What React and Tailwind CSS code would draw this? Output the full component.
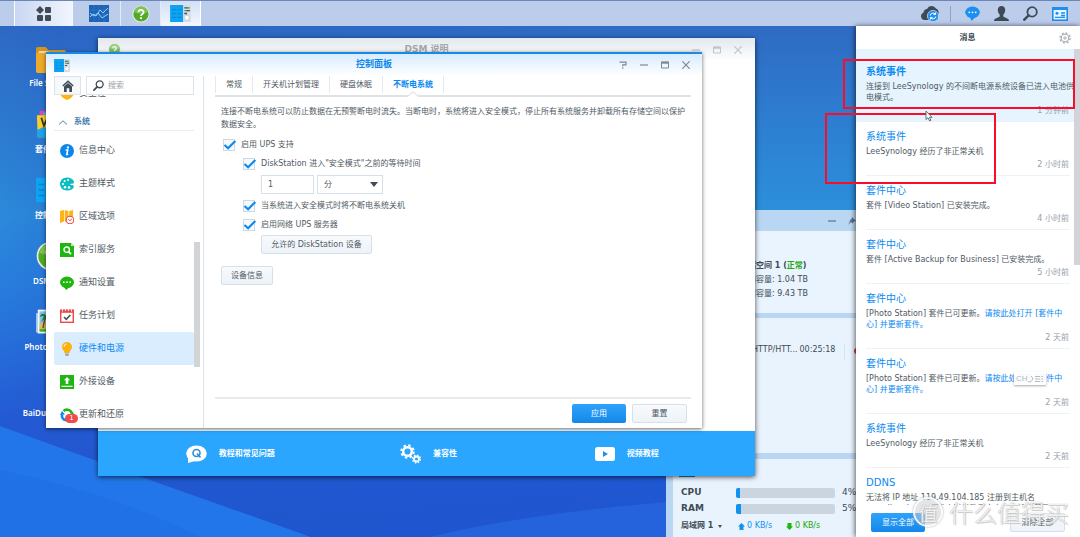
const shortcuts = [
  { name: 'File Station', icon: FolderIcon },
  { name: '套件中心', icon: PackageIcon },
  { name: '控制面板', icon: PanelIcon },
  { name: 'DSM 说明', icon: HelpIcon },
  { name: 'Photo Station', icon: PhotoIcon },
  { name: 'BaiDu NetDisk', icon: null },
]

const sections = [
  { name: '信息中心', icon: InfoIcon },
  { name: '主题样式', icon: PaletteIcon },
  { name: '区域选项', icon: RegionIcon },
  { name: '索引服务', icon: IndexIcon },
  { name: '通知设置', icon: NotifyIcon },
  { name: '任务计划', icon: TaskIcon },
  { name: '硬件和电源', icon: BulbIcon, active: true },
  { name: '外接设备', icon: DeviceIcon },
  { name: '更新和还原', icon: UpdateIcon, badge: 1 },
]

const tabs = ['常规', '开关机计划管理', '硬盘休眠', '不断电系统']

const messages = [
  { title: '系统事件', body: '连接到 LeeSynology 的不间断电源系统设备已进入电池供电模式。', time: '1 分钟前', unread: true },
  { title: '系统事件', body: 'LeeSynology 经历了非正常关机', time: '2 小时前' },
  { title: '套件中心', body: '套件 [Video Station] 已安装完成。', time: '4 小时前' },
  { title: '套件中心', body: '套件 [Active Backup for Business] 已安装完成。', time: '5 小时前' },
  { title: '套件中心', body: '[Photo Station] 套件已可更新。', link: '请按此处打开 [套件中心] 并更新套件。', time: '2 天前' },
  { title: '套件中心', body: '[Photo Station] 套件已可更新。', link: '请按此处打开 [套件中心] 并更新套件。', time: '2 天前' },
  { title: '系统事件', body: 'LeeSynology 经历了非正常关机', time: '2 天前' },
  { title: 'DDNS', body: '无法将 IP 地址 119.49.104.185 注册到主机名 www.lineok.cn，因为(未知)致了向右，请检查是否设置', time: '3 天前' },
]

/* ---------- icons ---------- */

function FolderIcon({ className }) {
  return (
    <svg viewBox="0 0 34 30" className={className} preserveAspectRatio="none">
      <path d="M0 6a2 2 0 0 1 2-2h9l3 3h18a2 2 0 0 1 2 2v17H0z" fill="#d9931a" />
      <path d="M3 8h29v8H3z" fill="#e9d9ae" />
      <path d="M0 10h12l3-2h17v20a2 2 0 0 1-2 2H2a2 2 0 0 1-2-2z" fill="#eeaa2c" />
    </svg>
  )
}

function PackageIcon({ className }) {
  return (
    <svg viewBox="0 0 34 30" className={className}>
      <path d="M4 0h12v8H4z" fill="#e83fb0" />
      <path d="M8 2h20v8H8z" fill="#35c0ee" />
      <path d="M1 5h32v12l-3 13H2z" fill="#f6cf2b" />
      <path d="M1 22l6-3h20l6 3v8H1z" fill="#1ea4e8" />
      <path d="M6 8l3 9 3-7 3 7 3-9" fill="none" stroke="#333" strokeWidth="2" />
    </svg>
  )
}

function PanelIcon({ className }) {
  return (
    <svg viewBox="0 0 22 18" className={className}>
      <rect x="0" y="0" width="14" height="18" fill="#0da2f2" />
      <path d="M2 5h4M2 9h4M2 13h4M8 5h4M8 9h4M8 13h4" stroke="#0784d0" strokeWidth="1" />
      <rect x="14" y="0" width="8" height="18" fill="#d7dee6" />
      <path d="M15 3h4M17 6h4M15 9h3" stroke="#3f5063" strokeWidth="1.4" />
      <path d="M18 3h3M15 6h2" stroke="#37b34a" strokeWidth="1.4" />
      <circle cx="17.800" cy="13.500" r="2.600" fill="#fff" stroke="#b5bec8" strokeWidth=".6" />
    </svg>
  )
}

function HelpIcon({ className }) {
  return (
    <svg viewBox="0 0 18 18" className={className}>
      <circle cx="9" cy="9" r="8.600" fill="#e4ecdf" />
      <circle cx="9" cy="9" r="7.600" fill="#53a928" />
      <path d="M2 7a7.200 7.200 0 0 1 14 0q-7 3-14 0" fill="#7cc552" />
      <path d="M6.500 7.200a2.500 2.300 0 1 1 3.700 2Q9 9.900 9 11" fill="none" stroke="#fff" strokeWidth="1.700" />
      <circle cx="9" cy="13.200" r="1.100" fill="#fff" />
    </svg>
  )
}

function PhotoIcon({ className }) {
  return (
    <svg viewBox="0 0 34 30" className={className}>
      <rect x="0" y="5" width="28" height="22" fill="#9fc8e8" />
      <rect x="2" y="1" width="32" height="27" fill="#f5f7f8" />
      <rect x="4" y="3" width="28" height="20" fill="#7cc3ea" />
      <path d="M4 17l10-4 18 8v4H4z" fill="#e2b766" />
      <path d="M4 23h28v3H4z" fill="#36b81e" />
      <path d="M8 22Q9 13 12 8" fill="none" stroke="#6b4a20" strokeWidth="1.600" />
      <path d="M12 8Q7 3 4 9l5-1-3 7 6-6 5 6 0-6 5 1Q18 3 12 8" fill="#1d7a35" />
    </svg>
  )
}

function InfoIcon({ className }) {
  return (
    <svg viewBox="0 0 14 14" className={className}>
      <circle cx="7" cy="7" r="7" fill="#0b86ec" />
      <circle cx="7.900" cy="3.500" r="1.150" fill="#fff" />
      <path d="M5.600 6h2.200L6.700 10.600h1.500" fill="none" stroke="#fff" strokeWidth="1.500" />
    </svg>
  )
}

function PaletteIcon({ className }) {
  return (
    <svg viewBox="0 0 14 14" className={className}>
      <path d="M7 .5C11 .5 14 3 14 5.200c0 1.500-1.500 1.600-3 1.600-1 0-1 1.200 0 1.300 1.300.1 3 .2 2.800 1.600C13.500 12 10.500 13.500 7 13.500 3 13.500 0 10.700 0 7S3 .5 7 .5z" fill="#0fbdc2" />
      <g fill="#fff">
        <circle cx="3" cy="7" r="1.100" /><circle cx="4.600" cy="4" r="1" /><circle cx="8" cy="3" r=".9" /><circle cx="5" cy="10.200" r="1.200" /><circle cx="9" cy="10.500" r="1.200" />
      </g>
    </svg>
  )
}

function RegionIcon({ className }) {
  return (
    <svg viewBox="0 0 14 14" className={className}>
      <path d="M0 1l4-1v11.500L0 13zM4.700 0L8.500 1v11L4.700 11.500zM9.200 1L13 0v10H9.200z" fill="#fdb515" />
      <circle cx="10" cy="10" r="3.800" fill="#fff" stroke="#ef4848" strokeWidth="1.100" />
      <path d="M8.200 9.300l1.600 1.400 2-1.600" fill="none" stroke="#ef4848" strokeWidth="1" />
    </svg>
  )
}

function IndexIcon({ className }) {
  return (
    <svg viewBox="0 0 14 14" className={className}>
      <path d="M0 0h11l3 3v11H0z" fill="#1fb610" />
      <path d="M11 0v3h3z" fill="#bfeab8" />
      <circle cx="6.700" cy="6.700" r="2.700" fill="none" stroke="#fff" strokeWidth="1.400" />
      <path d="M8.600 8.600l2.400 2.600" stroke="#fff" strokeWidth="1.700" />
    </svg>
  )
}

function NotifyIcon({ className }) {
  return (
    <svg viewBox="0 0 14 14" className={className}>
      <ellipse cx="7" cy="6.300" rx="7" ry="5.800" fill="#1fb610" />
      <path d="M4 11l2 3 4-3z" fill="#1fb610" />
      <g fill="#fff"><circle cx="3.800" cy="6.200" r=".9" /><circle cx="7" cy="6.200" r=".9" /><circle cx="10.200" cy="6.200" r=".9" /></g>
    </svg>
  )
}

function TaskIcon({ className }) {
  return (
    <svg viewBox="0 0 14 14" className={className}>
      <rect x=".7" y="1.200" width="12.600" height="12.100" fill="#fff" stroke="#ef4848" strokeWidth="1.400" />
      <path d="M0 .8h14v3H0z" fill="#ef4848" />
      <path d="M2.500 0v2.500M11.500 0v2.500M5.500 0v2M8.500 0v2" stroke="#fff" strokeWidth=".8" />
      <path d="M4 8l2.300 2.300L10.300 6" fill="none" stroke="#46505c" strokeWidth="1.600" />
    </svg>
  )
}

function BulbIcon({ className }) {
  return (
    <svg viewBox="0 0 14 14" className={className}>
      <path d="M7 0a5 5 0 0 1 5 5c0 2.600-2.300 3.500-2.500 6h-5C4.300 8.500 2 7.600 2 5a5 5 0 0 1 5-5z" fill="#fdb10b" />
      <path d="M4 4.800A3.200 3.200 0 0 1 6.500 2" fill="none" stroke="#fff" strokeWidth="1" />
      <path d="M5 11.500h4v1.200L8 14H6l-1-1.300z" fill="#9ba5ae" />
    </svg>
  )
}

function DeviceIcon({ className }) {
  return (
    <svg viewBox="0 0 14 14" className={className}>
      <path d="M0 0h14v14H0z" fill="#1fb610" />
      <path d="M1.500 11.300h11" stroke="#fff" strokeWidth="1.200" />
      <path d="M7 2l3 3.300H8.300V9H5.700V5.300H4z" fill="#fff" />
    </svg>
  )
}

function UpdateIcon({ className }) {
  return (
    <svg viewBox="0 0 14 14" className={className}>
      <path d="M3.500 3A5.200 5.200 0 0 1 12 5.500" fill="none" stroke="#1fb610" strokeWidth="2.600" />
      <path d="M13.800 4.500L13 9 9.500 6z" fill="#1fb610" />
      <path d="M2 6.500A5 5 0 0 0 6 12.300" fill="none" stroke="#0b86ec" strokeWidth="2.600" />
      <path d="M0 7l2-4 3 3.500z" fill="#0b86ec" />
    </svg>
  )
}

function SearchIcon({ className }) {
  return (
    <svg viewBox="0 0 14 14" className={className} fill="none" stroke="currentColor">
      <circle cx="8.500" cy="5.500" r="4.400" strokeWidth="1.700" />
      <path d="M5.300 8.700L1.200 12.800" strokeWidth="2.300" strokeLinecap="round" />
    </svg>
  )
}

function HomeIcon({ className }) {
  return (
    <svg viewBox="0 0 12 12" className={className} fill="none" stroke="#414b55">
      <path d="M.8 6L6 1.300 11.200 6" strokeWidth="1.500" />
      <path d="M2 6.500L6 3l4 3.500V12H7.300V8.300H4.700V12H2z" fill="#414b55" stroke="none" />
    </svg>
  )
}

function MinusIcon() {
  return (
    <svg viewBox="0 0 8 8" className="size-2" fill="none" stroke="currentColor"><path d="M0 4h8" strokeWidth="1.200" /></svg>
  )
}

function WindowControls({ help }) {
  return (
    <div className="flex items-center gap-[13px]">
      {help && (
        <button type="button" aria-label="帮助">
          <svg viewBox="0 0 8 8" className="size-2" fill="none" stroke="currentColor" strokeWidth="1.200">
            <path d="M.5 1.200h6.500v2.600H3.800v1.400M3.800 6.300v1.400" />
          </svg>
        </button>
      )}
      <button type="button" aria-label="最小化"><MinusIcon /></button>
      <button type="button" aria-label="最大化">
        <svg viewBox="0 0 8 8" className="size-2" fill="none" stroke="currentColor">
          <path d="M.5 1h7v6h-7z" /><path d="M0 1.700h8" strokeWidth="2" />
        </svg>
      </button>
      <button type="button" aria-label="关闭">
        <svg viewBox="0 0 8 8" className="size-2" fill="none" stroke="currentColor" strokeWidth="1.200"><path d="M.3.3l7.400 7.400M7.700.3L.3 7.700" /></svg>
      </button>
    </div>
  )
}

/* ---------- desktop ---------- */

function Wallpaper() {
  return (
    <svg className="absolute inset-0 h-full w-full" viewBox="0 0 1080 537" preserveAspectRatio="none" aria-hidden="true">
      <defs>
        <linearGradient id="sky" x1="0" y1="0" x2="0" y2="1">
          <stop offset="0" stopColor="#2f66c0" />
          <stop offset=".4" stopColor="#2c90dd" />
          <stop offset=".55" stopColor="#287fe0" />
          <stop offset=".78" stopColor="#235ad6" />
          <stop offset="1" stopColor="#1e55cf" />
        </linearGradient>
        <linearGradient id="shade" x1="0" y1="0" x2="1" y2="0">
          <stop offset="0" stopColor="#2456c4" stopOpacity=".1" />
          <stop offset=".05" stopColor="#2456c4" stopOpacity=".3" />
          <stop offset=".6" stopColor="#2456c4" stopOpacity="0" />
        </linearGradient>
      </defs>
      <path d="M0 0h1080v537H0z" fill="url(#sky)" />
      <path d="M0 0h1080v537H0z" fill="url(#shade)" />
      <path d="M0 426Q110 466 212 502T310 537H0z" fill="#2376e9" />
      <path d="M0 470Q110 492 200 537H0z" fill="#2070e6" />
      <path d="M430 537Q540 510 720 498V537z" fill="#2463dc" />
    </svg>
  )
}

function Taskbar() {
  return (
    <header className="relative flex h-[26px] items-stretch border-t border-[#6c87b4] bg-[#bccdec]">
      <button type="button" aria-label="主菜单" className="ml-[14px] flex w-[59px] items-center justify-center border-x border-white/80 bg-linear-to-r from-[#c9d7f1] to-[#f1f5fd]">
        <svg viewBox="0 0 16 16" className="size-4" fill="#3f4a57">
          <path d="M4 0l4 4-4 4-4-4z" />
          <rect x="9" y="1" width="6" height="6" rx="1" /><rect x="1" y="9" width="6" height="6" rx="1" /><rect x="9" y="9" width="6" height="6" rx="1" />
        </svg>
      </button>
      <button type="button" aria-label="资源监控" className="ml-1 flex w-[44px] items-center justify-center border-r border-white/60">
        <svg viewBox="0 0 20 17" className="h-[17px] w-5">
          <rect width="20" height="17" fill="#1c63b5" />
          <path d="M0 5h20M0 10h20M5 0v17M10 0v17M15 0v17" stroke="#3b80cc" strokeWidth=".5" />
          <path d="M1 12l3-3 3 2 4-6 3 3 5-5M1 8l4 3 4-3 4 5 6-4" fill="none" stroke="#8fd0ff" strokeWidth="1" />
        </svg>
      </button>
      <button type="button" aria-label="DSM 说明" className="flex w-10 items-center justify-center border-r border-white/60"><HelpIcon className="size-[18px]" /></button>
      <button type="button" aria-label="控制面板" className="flex w-10 items-center justify-center border-r border-white bg-linear-to-b from-[#d3dff5] to-[#f3f7fe]"><PanelIcon className="h-[17px] w-[21px]" /></button>

      <div className="ml-auto flex items-center gap-[14px] pr-3 text-[#3f4a57]">
        <button type="button" aria-label="云同步">
          <svg viewBox="0 0 20 17" className="h-[17px] w-5">
            <path d="M4 15a4 4 0 0 1-.5-7.600A4 4 0 0 1 7 4a5 5 0 0 1 9-.5A4.500 4.500 0 0 1 18 10v5z" fill="#3f4a57" />
            <circle cx="13" cy="11" r="5.600" fill="#1c8ff0" stroke="#d8e8fb" strokeWidth=".7" />
            <path d="M10.200 10.500a2.900 2.900 0 0 1 5-1.500M15.800 11.500a2.900 2.900 0 0 1-5 1.500M15.500 7.500V9.500h-2M10.500 14.500v-2h2" fill="none" stroke="#fff" />
          </svg>
        </button>
        <span className="-ml-1 h-4 w-px bg-[#8fa3c6]" />
        <button type="button" aria-label="消息">
          <svg viewBox="0 0 15 15" className="size-[15px]">
            <ellipse cx="7.500" cy="6.300" rx="7.300" ry="5.800" fill="#1c8ff0" />
            <path d="M5 11l1.500 4L11 10.500z" fill="#1c8ff0" />
            <g fill="#fff"><circle cx="4.300" cy="6.300" r=".9" /><circle cx="7.500" cy="6.300" r=".9" /><circle cx="10.700" cy="6.300" r=".9" /></g>
          </svg>
        </button>
        <button type="button" aria-label="用户">
          <svg viewBox="0 0 15 15" className="size-[15px]" fill="currentColor">
            <path d="M7.500 0C10 0 11.300 1.700 11.200 4c0 2-.8 3.800-1.900 4.600v1.700c0 1.400 5.700 1.400 5.700 4.700H0c0-3.300 5.700-3.300 5.700-4.700V8.600C4.600 7.800 3.800 6 3.800 4 3.700 1.700 5 0 7.500 0z" />
          </svg>
        </button>
        <button type="button" aria-label="搜索"><SearchIcon className="size-[15px]" /></button>
        <button type="button" aria-label="小工具">
          <svg viewBox="0 0 16 14" className="h-[14px] w-4">
            <rect x=".8" y=".8" width="14.400" height="12.400" fill="#eaf4ff" stroke="#1c8ff0" strokeWidth="1.600" />
            <path d="M0 2h16" stroke="#1c8ff0" strokeWidth="2" />
            <circle cx="5" cy="6.200" r="1.500" fill="#1c8ff0" />
            <path d="M9 6h4M9 8.500h4M3 10.300h10" stroke="#1c8ff0" strokeWidth="1.300" />
          </svg>
        </button>
      </div>
    </header>
  )
}

function Shortcuts() {
  return (
    <nav className="relative ml-[11px] flex w-20 flex-col pt-[17px]">
      {shortcuts.map(({ name, icon: Icon }) => (
        <a key={name} href="#" className="flex h-[66px] flex-col items-center gap-1 text-white">
          <span className="flex size-[30px] items-center justify-center">{Icon && <Icon className="size-[30px]" />}</span>
          <span className="font-['Noto_Sans','Noto_Sans_CJK_SC',sans-serif] text-[8px] leading-3 font-semibold whitespace-nowrap">{name}</span>
        </a>
      ))}
    </nav>
  )
}

function Meter({ label, value }) {
  return (
    <div className="flex h-4 items-center">
      <span className="w-[55px] font-bold">{label}</span>
      <div className="h-[10px] w-[99px] overflow-hidden rounded-xs bg-[#cbd5df]">
        <div className="h-full bg-[#1192f0]" style={{ width: `${value}%` }} />
      </div>
      <span className="ml-[7px] text-[9px]">{value}%</span>
    </div>
  )
}

function Widgets() {
  return (
    <section className="absolute top-[210px] right-[180px] bottom-0 flex w-[234px] flex-col bg-[#b9d7f3] pl-[7px] text-[8px] text-[#414b55]">
      <div className="flex h-[21px] items-center justify-end gap-3 pr-10 text-[#5f7388]">
        <MinusIcon />
        <svg viewBox="0 0 8 8" className="mr-1 size-2" fill="currentColor"><path d="M4 0l4 4-2 .5-1.500 2L1.500 3.500l2-1.500zM3 5L0 8l2-4z" /></svg>
      </div>
      <div className="flex h-[82px] flex-col bg-[#e9f4fe] pt-7 pl-[67px] leading-[14px] whitespace-nowrap">
        <p className="font-bold">存储空间 1 (<span className="text-[#1fa810]">正常</span>)</p>
        <p>使用容量: 1.04 TB</p>
        <p>可用容量: 9.43 TB</p>
      </div>
      <div className="mt-[5px] flex h-[135px] bg-[#e9f3fd] pt-[26px] whitespace-nowrap">
        <span className="ml-[79px]">HTTP/HTT...</span>
        <span className="ml-[2px]">00:25:18</span>
        <span className="ml-[9px] h-4 w-px bg-[#d6e2ee]" />
        <span className="mt-1 ml-[9px] size-[6px] rounded-full bg-[#e0393e]" />
      </div>
      <div className="mt-[6px] flex flex-1 flex-col bg-[#e9f3fd] px-2 text-[9px]">
        <div className="mt-3 mb-2 ml-[-2px] h-[6px] w-4 bg-[#1c76bd]" />
        <Meter label="CPU" value={4} />
        <Meter label="RAM" value={5} />
        <div className="flex h-[18px] items-center whitespace-nowrap">
          <button type="button" className="flex w-[57px] items-center gap-[5px] text-[8px] font-bold">局域网 1
            <svg viewBox="0 0 4 3" className="h-[3px] w-1" fill="currentColor"><path d="M0 0h4L2 3z" /></svg>
          </button>
          <svg viewBox="0 0 7 7" className="mr-[2px] size-[7px]" fill="#1192f0"><path d="M3.500 0L7 3.500H5.500V7h-4V3.500H0z" /></svg>
          <span className="w-[39px] text-[8px] text-[#1192f0]">0 KB/s</span>
          <svg viewBox="0 0 7 7" className="mr-[2px] size-[7px]" fill="#1fb610"><path d="M3.500 7L7 3.500H5.500V0h-4v3.500H0z" /></svg>
          <span className="text-[8px] text-[#1fa810]">0 KB/s</span>
        </div>
      </div>
    </section>
  )
}

function HelpWindow() {
  return (
    <section className="absolute top-[38px] left-[98px] flex h-[438px] w-[657px] flex-col bg-white shadow-[0_1px_5px_rgba(0,0,0,0.7)]">
      <div className="grid h-[23px] grid-cols-3 items-center bg-linear-to-b from-[#e3e8ed] to-white px-[10px]">
        <HelpIcon className="size-[13px] opacity-70" />
        <h2 className="text-center text-[9px] font-bold text-[#a3a8ae]">DSM 说明</h2>
        <div className="flex justify-end pr-[3px] text-[#c0c5ca]"><WindowControls /></div>
      </div>
      <div className="mt-auto grid h-[45px] grid-cols-3 bg-[#2aa6ff] pr-[29px] pl-[33px] text-[8px] font-bold text-white">
        <a href="#" className="flex items-center justify-center gap-3">
          <svg viewBox="0 0 21 18" className="h-[18px] w-[21px]">
            <ellipse cx="10.500" cy="8.500" rx="10.300" ry="8" fill="#fff" />
            <path d="M2 11v7l7-2z" fill="#fff" />
            <circle cx="10.500" cy="8" r="3.500" fill="none" stroke="#2a8fdc" strokeWidth="1.600" />
            <path d="M11 8.500l3.500 4" stroke="#2a8fdc" strokeWidth="1.600" />
          </svg>
          教程和常见问题
        </a>
        <a href="#" className="flex items-center justify-center gap-3">
          <svg viewBox="0 0 21 20" className="h-5 w-[21px]" fill="none" stroke="#fff">
            <circle cx="7.500" cy="7.500" r="4.300" strokeWidth="2.400" />
            <circle cx="7.500" cy="7.500" r="6.200" strokeWidth="2" strokeDasharray="2.435 2.435" />
            <circle cx="16.500" cy="15" r="2.500" strokeWidth="1.800" />
            <circle cx="16.500" cy="15" r="3.900" strokeWidth="1.400" strokeDasharray="1.532 1.532" />
          </svg>
          兼容性
        </a>
        <a href="#" className="flex items-center justify-center gap-3">
          <svg viewBox="0 0 20 14" className="h-[14px] w-5"><rect width="20" height="14" rx="2.500" fill="#fff" /><path d="M8 4l5 3-5 3z" fill="#2a8fdc" /></svg>
          视频教程
        </a>
      </div>
    </section>
  )
}

function CheckRow({ id, label }) {
  return (
    <div className="flex h-[19px] items-center gap-[6px]">
      <span className="relative flex size-3">
        <input id={id} type="checkbox" defaultChecked className="peer size-3 appearance-none border border-[#cddae5] bg-[#f6fafd]" />
        <svg viewBox="0 0 12 12" className="pointer-events-none absolute inset-0 hidden size-3 overflow-visible peer-checked:block" fill="none" stroke="#0b8af0" strokeWidth="2.200">
          <path d="M1.500 6l3.600 3.300L12.300 2" />
        </svg>
      </span>
      <label htmlFor={id}>{label}</label>
    </div>
  )
}

function PlainButton({ children, className }) {
  return (
    <button type="button" className={`h-[19px] rounded-xs border border-[#d5e0ea] bg-linear-to-b from-[#f8fafc] to-[#edf3f9] text-[8px] text-[#505a64] ${className}`}>{children}</button>
  )
}

function Sidebar() {
  return (
    <aside className="flex w-[158px] shrink-0 flex-col border-r border-[#dde2e7] pl-2">
      <div className="flex gap-[5px]">
        <button type="button" aria-label="主页" className="flex h-[19px] w-[27px] items-center justify-center border border-[#dce4ec] bg-[#f5f9fc]"><HomeIcon className="size-3" /></button>
        <div className="flex h-[19px] w-[108px] items-center gap-1 border border-[#dce4ec] px-[6px] text-[#414b55]">
          <SearchIcon className="size-[11px] shrink-0" />
          <input type="text" placeholder="搜索" aria-label="搜索" className="w-full min-w-0 text-[8px] outline-none placeholder:text-[#9aa2aa]" />
        </div>
      </div>
      <div className="flex min-h-0 flex-1">
        <div className="flex w-[140px] flex-col overflow-hidden text-[9px] text-[#505a64]">
          <a href="#" className="flex h-[5px] shrink-0 items-end gap-[5px] overflow-hidden pl-[6px]">
            <svg viewBox="0 0 14 14" className="size-[14px] shrink-0"><path d="M7 0l7 2v5q-1 5-7 7-6-2-7-7V2z" fill="#fdb515" /></svg>
            <span className="leading-[14px]">安全性</span>
          </a>
          <div className="mb-[3px] flex h-[31px] shrink-0 items-center gap-[7px] border-b border-[#e9eef2] pt-[14px] pl-[5px] text-[8px] font-bold text-[#4b7fae]">
            <svg viewBox="0 0 8 5" className="h-[5px] w-2" fill="none" stroke="currentColor"><path d="M0 4.500L4 .8l4 3.700" /></svg>
            系统
          </div>
          {sections.map(({ name, icon: Icon, active, badge }) => (
            <a key={name} href="#" className={`flex h-[33px] shrink-0 items-center gap-[5px] rounded-xs pl-[6px] ${active ? 'bg-[#d9edff] text-[#0b8af0]' : ''}`}>
              <span className="relative">
                <Icon className="size-[14px]" />
                {badge && <span className="absolute top-[6px] left-[5px] flex h-[9px] w-[13px] items-center justify-center rounded-full bg-[#f04b4b] text-[7px] leading-none text-white">{badge}</span>}
              </span>
              {name}
            </a>
          ))}
        </div>
        <div className="mt-[147px] h-[125px] w-[6px] bg-[#d2d4d6]" />
      </div>
    </aside>
  )
}

function ControlPanel() {
  return (
    <section className="absolute top-[52px] left-[46px] flex h-[376px] w-[656px] flex-col border-t-2 border-[#168ae6] bg-white text-[8px] text-[#505a64] shadow-[0_1px_4px_rgba(0,0,0,0.6)]">
      <div className="grid h-[22px] shrink-0 grid-cols-3 items-center bg-linear-to-b from-[#d8ecff] to-white px-2">
        <PanelIcon className="h-[13px] w-4" />
        <h1 className="text-center text-[9px] font-bold text-[#0b86ea]">控制面板</h1>
        <div className="flex justify-end pr-1 text-[#7d8892]"><WindowControls help /></div>
      </div>
      <div className="flex min-h-0 flex-1">
        <Sidebar />
        <main className="flex flex-1 flex-col pr-[11px] pb-[5px] pl-[11px]">
          <div role="tablist" className="flex h-[21px] border-b-2 border-[#e0e3e6]">
            {tabs.map((tab, i) => {
              const current = i === 3
              return (
                <button key={tab} type="button" role="tab" aria-selected={current} className={`relative h-[17px] border-r border-[#e6eaee] px-[10px] whitespace-nowrap first:border-l ${current ? 'font-bold text-[#0b8af0]' : ''}`}>
                  {tab}
                  {current && (
                    <svg viewBox="0 0 10 6" className="absolute -bottom-1 left-1/2 h-[6px] w-[10px] -translate-x-1/2"><path d="M0 5L5 .8 10 5v1H0z" fill="#fff" /><path d="M0 5L5 .8 10 5" fill="none" stroke="#d5d9dd" /></svg>
                  )}
                </button>
              )
            })}
          </div>
          <form className="flex flex-1 flex-col items-start pt-2 pl-[6px]" onSubmit={(e) => e.preventDefault()}>
            <p className="w-[464px] text-[8px] leading-[13px]">连接不断电系统可以防止数据在无预警断电时流失。当断电时，系统将进入安全模式，停止所有系统服务并卸载所有存储空间以保护数据安全。</p>
            <div className="mt-1 flex flex-col pl-[2px]">
              <CheckRow id="ups" label="启用 UPS 支持" />
              <div className="flex flex-col pl-5">
                <CheckRow id="wait" label={'DiskStation 进入"安全模式"之前的等待时间'} />
                <div className="mt-[2px] mb-[2px] flex gap-[3px] pl-[18px]">
                  <input type="text" defaultValue="1" aria-label="等待时间" className="h-[19px] w-[53px] border border-[#d5e0ea] px-[6px]" />
                  <div className="relative">
                    <select aria-label="单位" className="h-[19px] w-[66px] appearance-none border border-[#d5e0ea] bg-white px-[6px]"><option>分</option></select>
                    <svg viewBox="0 0 8 5" className="pointer-events-none absolute top-[7px] right-[5px] h-[5px] w-2" fill="#414b55"><path d="M0 0h8L4 5z" /></svg>
                  </div>
                </div>
                <CheckRow id="off" label="当系统进入安全模式时将不断电系统关机" />
                <CheckRow id="net" label="启用网络 UPS 服务器" />
                <PlainButton className="mt-px ml-[18px] w-[111px]">允许的 DiskStation 设备</PlainButton>
              </div>
            </div>
            <PlainButton className="mt-3 w-[52px]">设备信息</PlainButton>
            <div className="mt-auto -ml-[6px] flex justify-end gap-[6px] self-stretch border-t-2 border-[#e8ebee] pt-[5px] pr-1">
              <button type="submit" className="h-[19px] w-[54px] rounded-xs bg-linear-to-b from-[#2fa2fb] to-[#1388ea] text-white">应用</button>
              <PlainButton className="w-[55px]">重置</PlainButton>
            </div>
          </form>
        </main>
      </div>
    </section>
  )
}

function Messages() {
  return (
    <aside className="absolute top-[26px] right-0 bottom-0 flex w-56 flex-col bg-white text-[8px] text-[#505a64] shadow-[-1px_0_5px_rgba(0,0,0,0.6)]">
      <div className="flex h-[23px] shrink-0 items-center justify-end pr-[9px]">
        <h2 className="flex-1 pl-[20px] text-center font-bold text-[#414b55]">消息</h2>
        <button type="button" aria-label="设置" className="text-[#a9afb5]">
          <svg viewBox="0 0 12 12" className="size-3" fill="none" stroke="currentColor">
            <circle cx="6" cy="6" r="3.800" strokeWidth="1.200" /><circle cx="6" cy="6" r="1.200" /><circle cx="6" cy="6" r="5.100" strokeWidth="1.300" strokeDasharray="2 2.005" />
          </svg>
        </button>
      </div>
      <div className="flex min-h-0 flex-1">
        <ul className="min-w-0 flex-1 overflow-hidden">
          {messages.map(({ title, body, link, time, unread }, i) => (
            <li key={i} className={`pl-[10px] ${unread ? 'bg-[#e5f4fe] pt-2' : 'pr-1'}`}>
              <div className="border-b border-[#edf1f4] pt-[9px] pb-1">
                <h3 className={`text-[10px] leading-3 text-[#0b8af0] ${unread ? 'font-bold' : ''}`}>{title}</h3>
                <p className="mt-[3px] leading-[11px]">{body}{link && <a href="#" className="text-[#0b8af0]">{link}</a>}</p>
                <p className={`mt-[2px] text-right leading-3 text-[#98a0a8] ${unread ? 'pr-[5px]' : 'pr-px'}`}>{time}</p>
              </div>
            </li>
          ))}
        </ul>
        <div className="h-[216px] w-[6px] bg-[#d2d4d8]" />
      </div>
      <div className="flex h-8 shrink-0 items-center justify-between px-[15px] pt-[3px]">
        <button type="button" className="h-[19px] w-[54px] rounded-xs bg-linear-to-b from-[#2fa2fb] to-[#1388ea] text-white">显示全部</button>
        <PlainButton className="w-[55px]">清除全部</PlainButton>
      </div>
    </aside>
  )
}

function Overlays() {
  return (
    <div className="pointer-events-none absolute inset-0">
      <div className="absolute top-[59px] right-[5px] h-[50px] w-[232px] border-2 border-[#fb0d2a]" />
      <div className="absolute top-[113px] right-[84px] h-[71px] w-[171px] border-2 border-[#fb0d2a]" />
      <svg viewBox="0 0 8 12" className="absolute top-[110px] right-[147px] h-3 w-2"><path d="M1 1v8.500l2-1.800L4.600 11l1.300-.7L4.500 7.300H7z" fill="#fff" stroke="#5a636c" strokeWidth=".9" /></svg>
      <div className="absolute top-[372px] right-[34px] flex h-[13px] w-8 items-center justify-between bg-white/90 px-[2px] font-['Liberation_Sans',sans-serif] text-[8px] text-[#b5b9bd] shadow-[0_1px_2px_rgba(0,0,0,0.35)]">
        CH
        <svg viewBox="0 0 16 8" className="h-2 w-4" fill="none" stroke="currentColor"><path d="M3 1a3 3 0 0 1-3 5.500M7 1.500h5M7 4h5M7 6.500h5M13.500 1.500H15M13.500 4H15M13.500 6.500H15" /></svg>
      </div>
      <div className="absolute right-[11px] bottom-[10px] flex items-center gap-[6px] font-['Noto_Sans_CJK_SC',sans-serif] text-white/85 [text-shadow:0_0_1px_#999,1px_1px_1px_#ccc]">
        <span className="flex size-[30px] items-center justify-center rounded-full border-2 border-white/85 bg-[#c9cccf]/50 text-[19px] leading-none shadow-[0_0_2px_#999]">值</span>
        <span className="text-[24px] leading-[30px] font-light">什么值得买</span>
      </div>
    </div>
  )
}

export default function App() {
  return (
    <div className="relative h-screen w-full overflow-hidden bg-[#2460d0] font-['DejaVu_Sans','Noto_Sans_CJK_SC',sans-serif] text-[8px]">
      <Wallpaper />
      <Taskbar />
      <Shortcuts />
      <Widgets />
      <HelpWindow />
      <ControlPanel />
      <Messages />
      <Overlays />
    </div>
  )
}
